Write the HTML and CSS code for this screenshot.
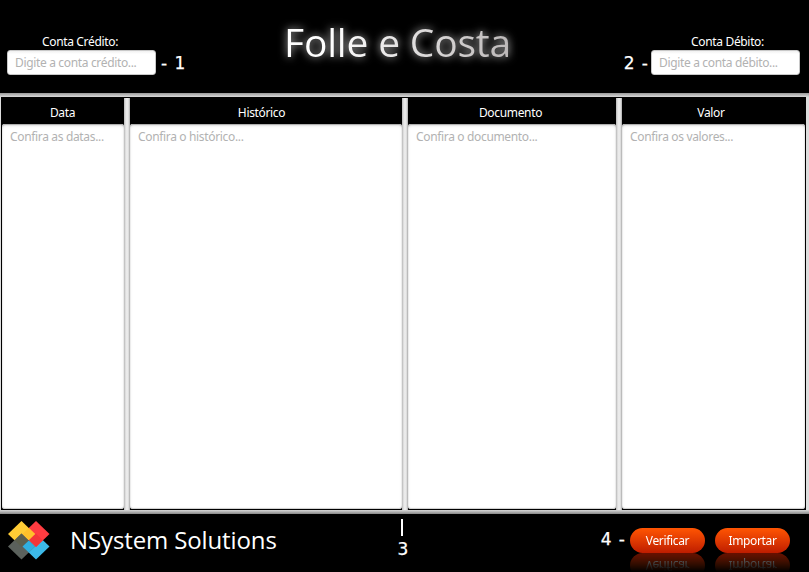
FILE: index.html
```html
<!DOCTYPE html>
<html lang="pt-BR">
<head>
<meta charset="utf-8">
<title>Folle e Costa</title>
<link rel="stylesheet" href="styles.css">
</head>
<body>
<div class="app">
  <header class="header">
    <div class="account credit">
      <div class="field"><label for="credito">Conta Crédito:</label><input id="credito" type="text" placeholder="Digite a conta crédito..."></div>
      <span class="mark">- 1</span>
    </div>
    <h1 class="title"><span>Folle e Costa</span></h1>
    <div class="account debit">
      <span class="mark">2 -</span>
      <div class="field"><label for="debito">Conta Débito:</label><input id="debito" type="text" placeholder="Digite a conta débito..."></div>
    </div>
  </header>
  <main class="split">
    <section class="pane"><h2>Data</h2><textarea placeholder="Confira as datas..."></textarea></section>
    <div class="divider"></div>
    <section class="pane"><h2 class="wide">Histórico</h2><textarea placeholder="Confira o histórico..."></textarea></section>
    <div class="divider"></div>
    <section class="pane"><h2>Documento</h2><textarea placeholder="Confira o documento..."></textarea></section>
    <div class="divider"></div>
    <section class="pane"><h2 class="last">Valor</h2><textarea placeholder="Confira os valores..."></textarea></section>
  </main>
  <footer class="footer">
    <svg class="logo" width="42" height="40" viewBox="0 0 42 40">
      <path fill="#3cb9e8" d="M28 12.500 41.500 25.500 28 38.500 14.500 25.500z"/>
      <path fill="#ff3c41" d="M28 0 41.500 13 28 26 14.500 13z"/>
      <path fill="#ffcc35" d="M13.500 0 27 13 13.500 26 0 13z"/>
      <path fill="#5b615c" d="M13.500 12.500 27 25.500 13.500 38.500 0 25.500z"/>
      <path fill="#f33539" d="M28 12.500 34.800 19.200 28 26 21.200 19.200z"/>
      <path fill="#ffc12b" d="M20.800 7 27 13 20.800 19 14.500 13z"/>
      <path fill="#30afe0" d="M20.800 19.500 27 25.500 20.800 31.500 14.500 25.500z"/>
      <path fill="#5c5f4e" d="M13.500 12.500 20.300 19.200 13.500 26 6.700 19.200z"/>
    </svg>
    <div class="brand">NSystem Solutions</div>
    <div class="pointer"><i></i><span class="mark">3</span></div>
    <div class="actions">
      <span class="mark">4 -</span>
      <button type="button">Verificar</button>
      <button type="button">Importar</button>
    </div>
  </footer>
</div>
</body>
</html>
```

FILE: styles.css
```css
* { box-sizing: border-box; }
body {
  margin: 0;
  background: #000;
  color: #fff;
  font: 12px/16px "Noto Sans", "Open Sans", sans-serif;
  letter-spacing: -0.34px;
  overflow: hidden;
}
.app {
  width: 809px;
  height: 572px;
  display: grid;
  grid-template-rows: 93px 421px 58px;
}
.header {
  display: grid;
  grid-template-columns: 250px 295px 264px;
}
.account { display: flex; align-items: flex-end; padding: 0 7px 18px; gap: 5px; }
.debit { justify-content: flex-end; padding-right: 9px; gap: 3px; }
.field { display: flex; flex-direction: column; width: 149px; }
.field label { text-align: center; padding-right: 3px; }
.debit label { padding: 0 0 0 4px; }
input, textarea, button { font: inherit; letter-spacing: inherit; margin: 0; border: 0; outline: 0; }
input {
  width: 149px;
  height: 25px;
  border-radius: 3px;
  border: 1px solid #c8c8c8;
  padding: 0 7px;
  background: linear-gradient(#f0f0f0, #fff 3px);
}
::placeholder { color: #b2b2b2; opacity: 1; }
.mark { font: 17px/20px "DejaVu Sans", sans-serif; letter-spacing: 0; word-spacing: 2px; white-space: pre; -webkit-text-stroke: 0.25px #fff; }
.header .mark { padding-bottom: 2px; }
.title {
  margin: 0;
  padding-top: 15px;
  text-align: center;
  font-family: "Open Sans", sans-serif;
  font-size: 39px;
  line-height: 54px;
  font-weight: 400;
  letter-spacing: -0.2px;
  white-space: nowrap;
}
.title span {
  background: linear-gradient(90deg, #fff 20%, #bcb8b8);
  -webkit-background-clip: text;
  background-clip: text;
  color: transparent;
  filter: drop-shadow(0 0 4px rgba(255, 255, 255, .8));
}
.split {
  display: grid;
  grid-template-columns: 123px 6px 272px 6px 208px 6px 184px;
  border-style: solid;
  border-width: 4px 3px 4px 1px;
  border-color: #c0c0c0 #b8b8b8 #a8a8a8 #c8c8c8;
  border-image: linear-gradient(#999, #ddd 1%, #ddd 99%, #888) 4 3 4 1;
  background: #000;
}
.pane { display: flex; flex-direction: column; padding: 1px 0; min-width: 0; }
.pane:first-child { padding: 1px 0 1px 1px; }
.pane:last-child { padding-right: 1px; }
.pane + .divider { margin-top: 1px; }
.divider { background: linear-gradient(90deg, #b8b8b8, #ddd 25%, #f1f1f1 50%, #ddd 75%, #aaa); }
.pane h2 { margin: 0; height: 26px; font: inherit; line-height: 30px; text-align: center; padding-right: 3px; }
.pane:first-child h2 { padding-right: 1px; }
.pane h2.wide { padding-right: 9px; }
.pane h2.last { padding-right: 5px; }
textarea {
  flex: 1;
  width: 100%;
  resize: none;
  padding: 5px 8px;
  border-radius: 3px;
  background: #fff;
  box-shadow: inset 0 1px 1px #aaa, inset 0 2px 3px #e5e5e5, inset 0 -1px 1px #ccc;
}
.footer { display: grid; grid-template-columns: 70px 320px 26px 1fr; }
.logo { margin: 7px 0 0 8px; }
.brand { font-family: "Open Sans", sans-serif; font-size: 24px; line-height: 34px; padding-top: 9px; letter-spacing: -0.12px; }
.pointer { display: flex; flex-direction: column; align-items: center; padding-top: 5px; }
.pointer i { width: 2px; height: 17px; background: #fff; margin-right: 2px; }
.pointer .mark { margin-top: 3px; }
.actions { display: flex; justify-content: flex-end; align-items: flex-start; gap: 10px; padding: 14px 19px 0 0; }
.actions .mark { margin: 1px -5px 0 0; }
button {
  width: 75px;
  height: 25px;
  padding: 0;
  border-radius: 13px;
  color: #fff;
  background: linear-gradient(#ff5502, #e03a02 50%, #be1d00);
  -webkit-box-reflect: below 0 linear-gradient(transparent 25%, rgba(0, 0, 0, .55));
}
```
